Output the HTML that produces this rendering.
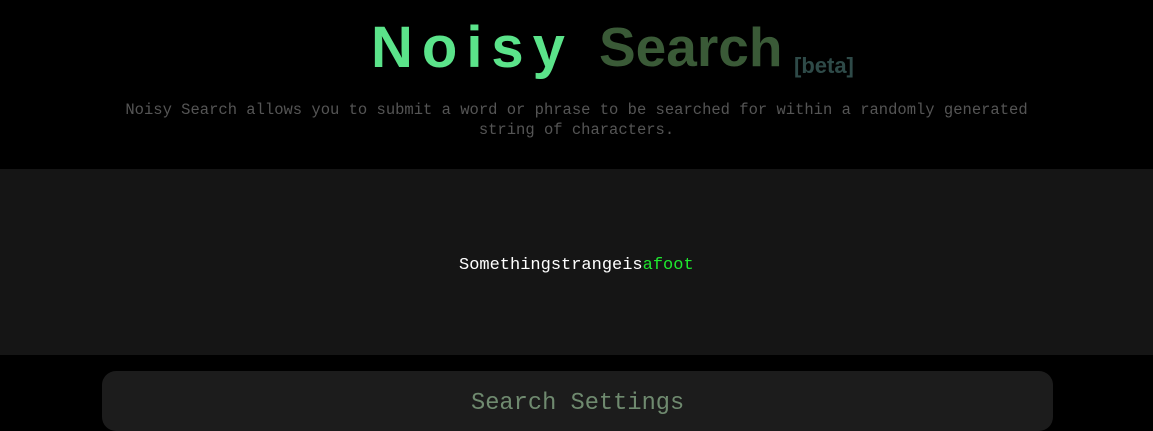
<!DOCTYPE html>
<html><head><style>
html,body{margin:0;padding:0;background:#000;width:1153px;height:400px;overflow:hidden}
.t{position:absolute;white-space:nowrap;font-family:"Liberation Sans",sans-serif;font-weight:bold}
.m{position:absolute;white-space:nowrap;font-family:"Liberation Mono",monospace}
</style></head><body>
<div class="t" style="left:371px;top:14px;font-size:58px;letter-spacing:9px;color:#5be38a">Noisy</div>
<div class="t" style="left:599px;top:15px;font-size:55px;color:#3a5a37">Search</div>
<div class="t" style="left:794px;top:53px;font-size:22px;color:#2e4a48">[beta]</div>
<div class="m" style="left:0;width:1153px;text-align:center;top:100px;font-size:15.5px;line-height:20px;color:#555">Noisy Search allows you to submit a word or phrase to be searched for within a randomly generated<br>string of characters.</div>
<div style="position:absolute;left:0;top:169px;width:1153px;height:186px;background:#151515"></div>
<div class="m" style="left:459px;top:256px;font-size:17px;color:#fff">Somethingstrangeis<span style="color:#1ee82e">afoot</span></div>
<div style="position:absolute;left:102px;top:371px;width:951px;height:60px;background:#1c1c1c;border-radius:14px"></div>
<div class="m" style="left:471px;top:390px;font-size:23.7px;color:#6f8a6f">Search Settings</div>
</body></html>
